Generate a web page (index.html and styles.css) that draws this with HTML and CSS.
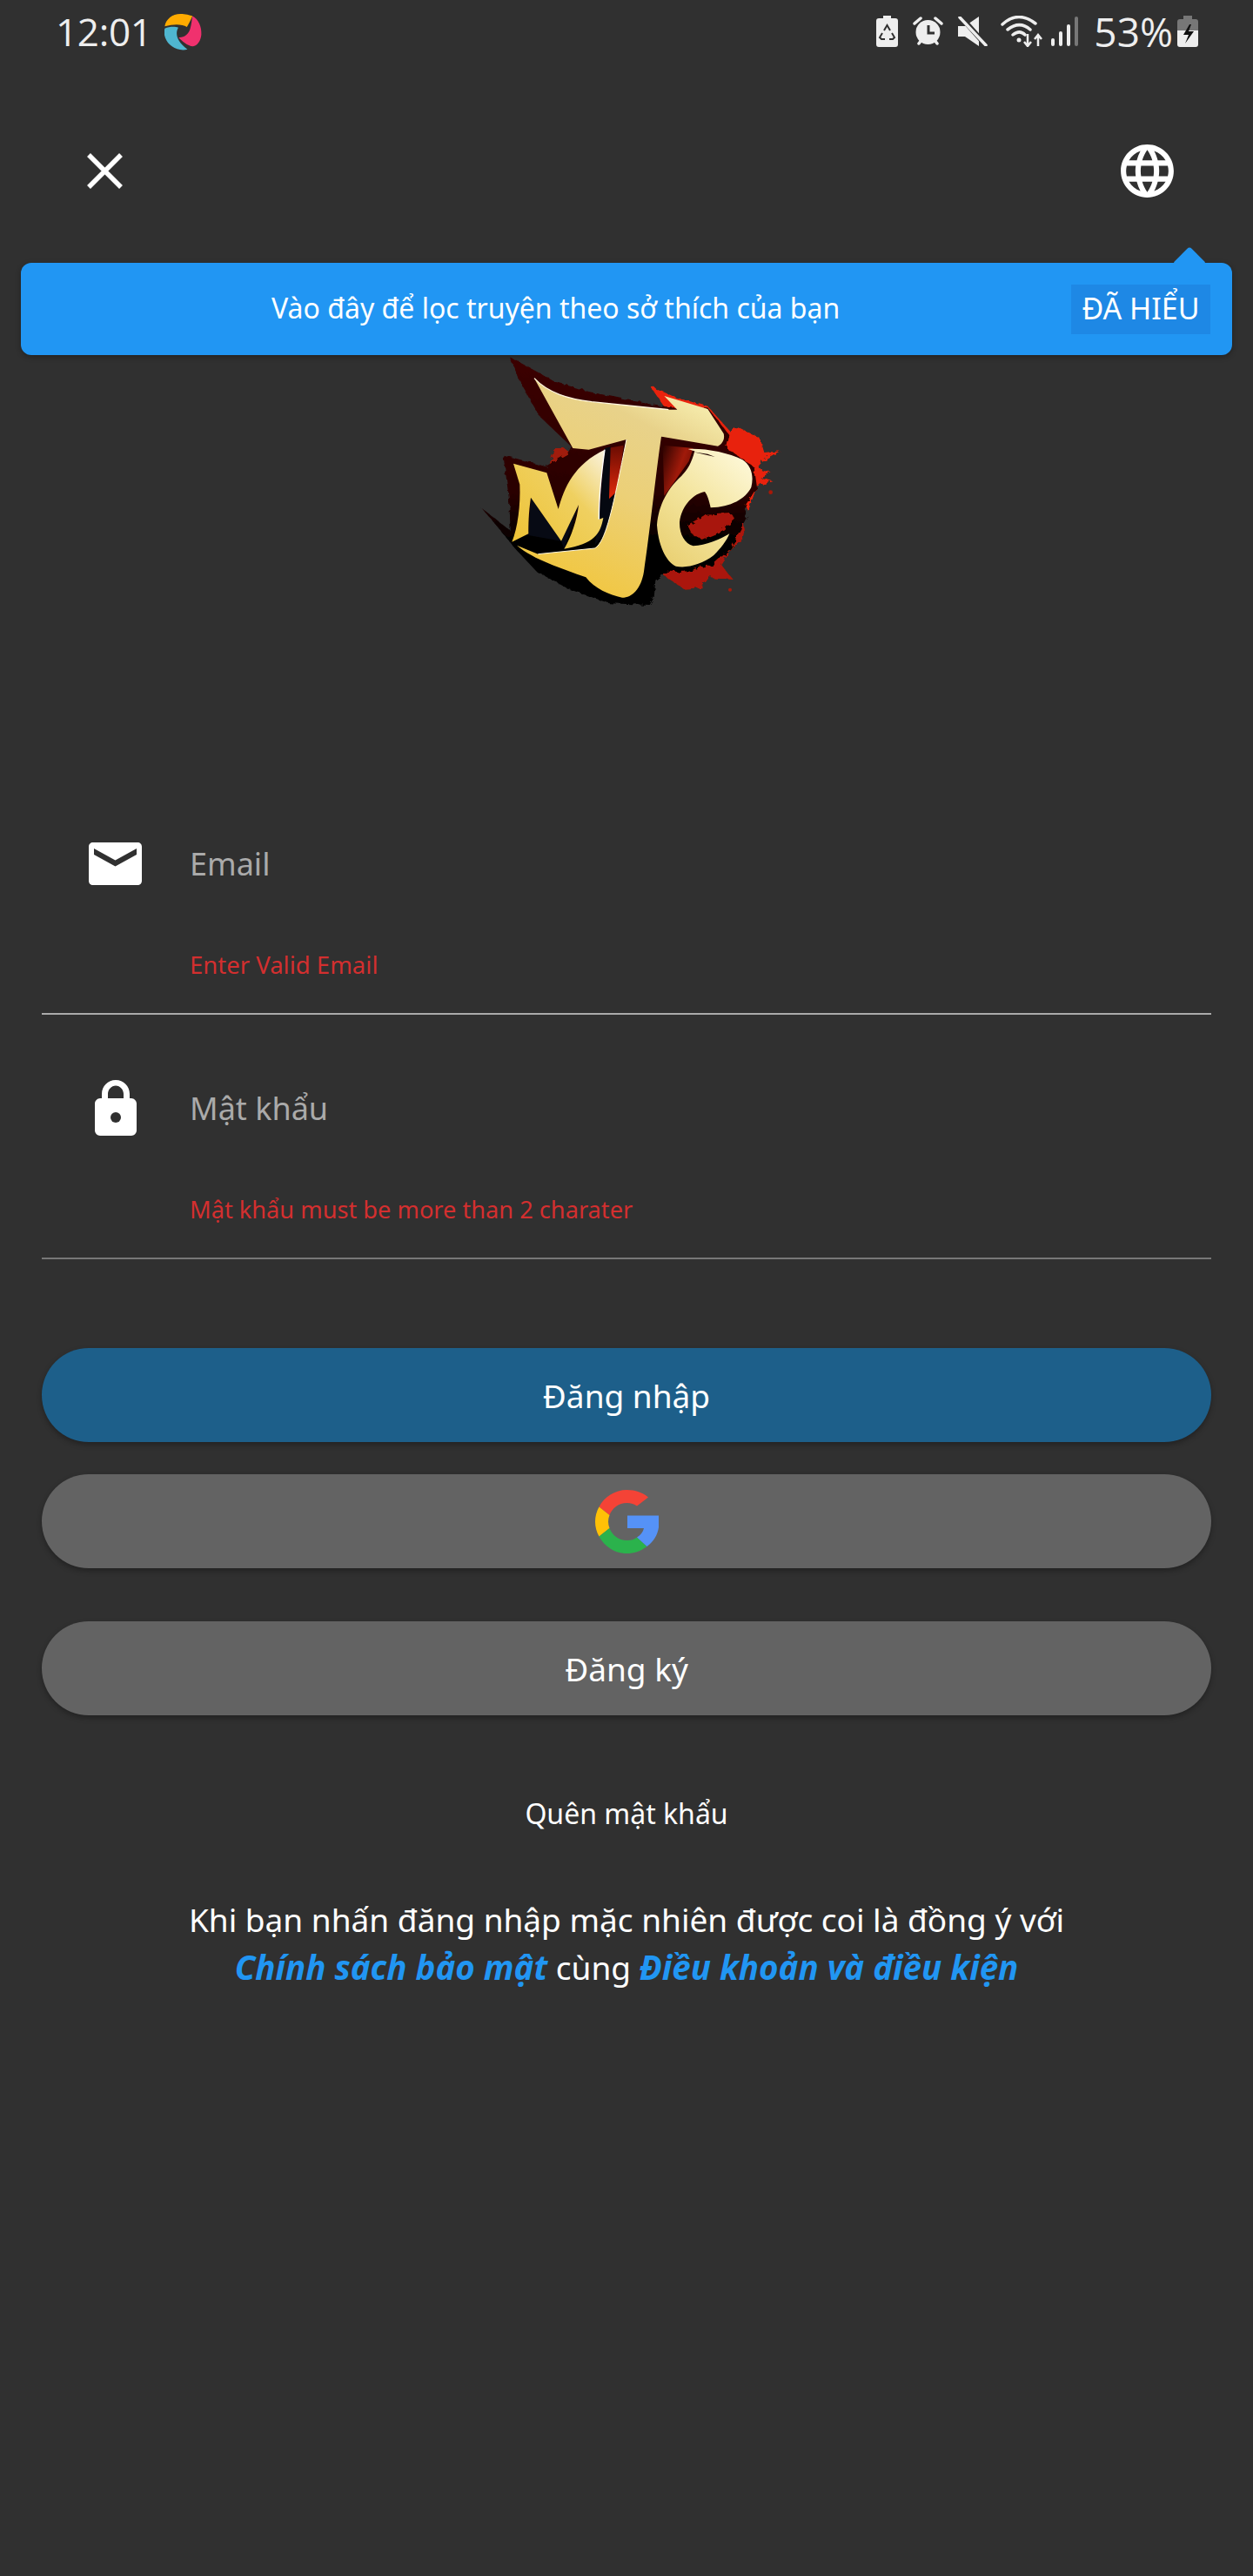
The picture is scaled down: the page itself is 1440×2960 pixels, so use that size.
FILE: index.html
```html
<!DOCTYPE html>
<html lang="vi">

<head>
    <meta charset="UTF-8">
    <meta name="viewport" content="width=device-width, initial-scale=1.0">
    <title>Đăng nhập</title>
    <link rel="stylesheet" href="styles.css">
</head>

<body>

    <div class="status-bar">
        <span class="status-time">12:01</span>
        <svg class="app-dot" width="43" height="43" viewBox="57 28 135 120" preserveAspectRatio="none">
            <path d="M58 68C62 45 85 28 115 28c15 0 35 4 43 7-8 15-13 25-20 35-18-10-48-10-80-2z" fill="#ffab00" />
            <path d="M58 75c17-7 37-7 49-3-12 18-7 43 33 70-35 8-70-12-80-37-5-13-5-20-2-30z" fill="#4fb6d0" />
            <path d="M158 35c22 10 34 35 32 60-2 20-15 35-30 37-20-2-40-17-52-29 17 2 37-8 42-28 5-15 5-25 8-40z" fill="#f0316e" />
        </svg>
        <div class="status-icons">
            <svg width="25" height="36" viewBox="0 0 25 36">
                <path d="M8 0h9v3h5c2 0 3 1 3 3v27c0 2-1 3-3 3H3c-2 0-3-1-3-3V6c0-2 1-3 3-3h5z" fill="#eee" />
                <path d="M9 17l3.500-6 3.500 6M7 20l-3 5 2 2h4M15 27h4l2-2-3-5" stroke="#303030" stroke-width="2" fill="none" />
            </svg>
            <svg width="35" height="34" viewBox="0 0 35 34">
                <circle cx="17.500" cy="18" r="14" fill="#eee" />
                <path d="M2 8l7-6M33 8l-7-6M7 31l3-4M28 31l-3-4" stroke="#eee" stroke-width="3.500" stroke-linecap="round" />
                <path d="M18 10v9h7" stroke="#303030" stroke-width="3" fill="none" />
            </svg>
            <svg width="34" height="34" viewBox="0 0 34 34">
                <path d="M0 11h8L24 0v34L8 23H0z" fill="#eee" />
                <path d="M2 -1l32 36" stroke="#303030" stroke-width="6" />
                <path d="M2 1l30 32" stroke="#eee" stroke-width="3.500" stroke-linecap="round" />
            </svg>
            <svg class="wifi" width="48" height="36" viewBox="0 0 48 36">
                <path d="M2 10C14-1 27-1 40 9M8 16c9-7 18-7 26 0M14 22c5-4 10-4 14 0" stroke="#eee" stroke-width="3.500" fill="none" stroke-linecap="round" />
                <circle cx="21" cy="28" r="2.500" fill="#eee" />
                <path d="M31 21v14m-4-5l4 5 4-5M43 35V23m-4 4l4-5 4 5" stroke="#eee" stroke-width="2.500" fill="none" />
            </svg>
            <svg class="signal" width="31" height="34" viewBox="0 0 31 34">
                <rect x="0" y="25" width="4" height="9" rx="2" fill="#eee" />
                <rect x="9" y="17" width="4" height="17" rx="2" fill="#eee" />
                <rect x="18" y="9" width="4" height="25" rx="2" fill="#eee" />
                <rect x="27" y="0" width="4" height="34" rx="2" fill="#777" />
            </svg>
            <span class="status-battery-text">53%</span>
            <svg class="battery" width="24" height="36" viewBox="0 0 24 36">
                <path d="M7 0h10v4h4c2 0 3 1 3 3v10H0V7c0-2 1-3 3-3h4z" fill="#777" />
                <path d="M0 17h24v16c0 2-1 3-3 3H3c-2 0-3-1-3-3z" fill="#eee" />
                <path d="M14 10l-7 12h6l-4 10 10-14h-6l3-8z" fill="#111" />
            </svg>
        </div>
    </div>

    <header class="top-bar">
        <svg class="close-icon" width="41" height="41" viewBox="0 0 41 41">
            <path d="M2 2l37 37M39 2L2 39" stroke="#fff" stroke-width="5.500" />
        </svg>
        <svg class="globe-icon" width="73" height="73" viewBox="0 0 24 24">
            <path fill="#fff" d="M11.990 2C6.470 2 2 6.480 2 12s4.470 10 9.990 10C17.520 22 22 17.520 22 12S17.520 2 11.990 2zm6.930 6h-2.950c-.32-1.250-.78-2.450-1.380-3.560 1.840.63 3.370 1.910 4.330 3.560zM12 4.040c.83 1.200 1.480 2.530 1.910 3.960h-3.820c.43-1.430 1.080-2.760 1.910-3.960zM4.260 14C4.100 13.360 4 12.690 4 12s.1-1.360.26-2h3.380c-.08.660-.14 1.320-.14 2 0 .68.060 1.340.14 2H4.260zm.82 2h2.950c.32 1.250.78 2.450 1.380 3.560-1.840-.63-3.370-1.900-4.330-3.560zm2.950-8H5.080c.96-1.660 2.490-2.930 4.330-3.560C8.810 5.550 8.350 6.750 8.030 8zM12 19.960c-.83-1.200-1.480-2.530-1.910-3.960h3.820c-.43 1.430-1.080 2.760-1.910 3.960zM14.340 14H9.660c-.09-.66-.16-1.320-.16-2 0-.68.070-1.350.16-2h4.680c.09.650.16 1.320.16 2 0 .68-.07 1.340-.16 2zm.25 5.560c.6-1.110 1.060-2.310 1.380-3.560h2.950c-.96 1.650-2.490 2.930-4.330 3.560zM16.360 14c.08-.66.14-1.320.14-2 0-.68-.06-1.340-.14-2h3.380c.16.640.26 1.310.26 2s-.1 1.360-.26 2h-3.380z" />
        </svg>
    </header>

    <div class="tip">
        <span class="tip-text">Vào đây để lọc truyện theo sở thích của bạn</span>
        <button class="tip-btn">ĐÃ HIỂU</button>
    </div>

    <div class="logo">
        <svg width="400" height="320" viewBox="0 0 1200 960">
            <defs>
                <linearGradient id="goldT" x1="0.2" y1="1" x2="0.7" y2="0">
                    <stop offset="0" stop-color="#f2c537" />
                    <stop offset="0.5" stop-color="#ecd077" />
                    <stop offset="0.8" stop-color="#e8d28a" />
                    <stop offset="1" stop-color="#f7eeb0" />
                </linearGradient>
                <linearGradient id="goldM" x1="0" y1="1" x2="1" y2="0">
                    <stop offset="0" stop-color="#eec232" />
                    <stop offset="0.6" stop-color="#efd060" />
                    <stop offset="1" stop-color="#faf3e0" />
                </linearGradient>
                <linearGradient id="goldC" x1="0.1" y1="1" x2="0.8" y2="0">
                    <stop offset="0" stop-color="#e9cf70" />
                    <stop offset="0.5" stop-color="#f3e49c" />
                    <stop offset="1" stop-color="#fdf7d6" />
                </linearGradient>
                <linearGradient id="darkEdge" x1="0" y1="0" x2="0" y2="1">
                    <stop offset="0" stop-color="#3c0402" />
                    <stop offset="0.55" stop-color="#2a0200" />
                    <stop offset="0.75" stop-color="#000" />
                </linearGradient>
                <linearGradient id="redPanel" x1="0" y1="0" x2="1" y2="0.6">
                    <stop offset="0" stop-color="#2a0200" />
                    <stop offset="0.6" stop-color="#a01a0a" />
                    <stop offset="1" stop-color="#6a0c02" />
                </linearGradient>
                <linearGradient id="redSlit" x1="0" y1="0" x2="0" y2="1">
                    <stop offset="0" stop-color="#6a0c02" />
                    <stop offset="1" stop-color="#e42a0c" />
                </linearGradient>
                <filter id="rough" x="-5%" y="-5%" width="110%" height="110%">
                    <feTurbulence type="fractalNoise" baseFrequency="0.05" numOctaves="2" seed="4" />
                    <feDisplacementMap in="SourceGraphic" scale="22" />
                </filter>
            </defs>
            <!-- splashes -->
            <g filter="url(#rough)">
                <path d="M680 130L770 170 880 200 960 290 980 270 1060 310 1075 360 1130 355 1060 392 1062 420 1100 430 1060 445 1105 460 1050 475 1020 560 900 400 800 300z" fill="#e8240a" />
                <path d="M1000 560L1010 650 960 690 925 745 965 795 885 790 860 825 800 830 730 785 720 740 900 600z" fill="#ab1808" />
                <path d="M335 400L350 345 385 345 420 370 375 385 355 410z" fill="#a01a08" />
                <path d="M195 28L300 85 350 115 470 150 640 185 740 205 880 205 955 300 945 345 1040 410 1050 480 1005 550 1018 576 985 640 960 690 900 745 800 770 740 770 700 800 695 860 680 885 540 880 400 830 290 770 215 690 150 610 97 548 200 630 195 520 175 368 320 408 395 365 410 340 300 235 240 130z" fill="url(#darkEdge)" />
            </g>
            <circle cx="1097" cy="497" r="7" fill="#a81808" />
            <circle cx="957" cy="833" r="6" fill="#a81808" />
            <path d="M725 335L830 345 815 390 730 510z" fill="url(#redPanel)" />
            <path d="M535 345L590 335 570 490 540 520z" fill="url(#redSlit)" />
            <path d="M525 345L545 340 540 520 580 490 555 600 490 680 505 590z" fill="#050811" />
            <path d="M810 610L870 575 960 570 975 590 930 630 860 660 825 640z" fill="#a81508" filter="url(#rough)" />
            <path d="M270 515L375 665 262 645z" fill="#070a14" />
            <path d="M435 540L385 692 375 665z" fill="#070a14" />
            <!-- letters -->
            <path d="M282 104C330 155 400 175 480 185L745 212 775 212 730 165 880 210 935 295C940 315 930 330 915 338L720 305C700 440 680 640 660 770 650 830 620 860 585 860 540 850 490 830 460 790 380 760 280 730 222 680L295 710 490 690C530 670 555 540 600 315L470 350 415 345z" fill="url(#goldT)" />
            <path d="M210 398L325 430 365 555C385 480 420 400 525 350 515 420 505 520 505 590L520 585C510 640 490 675 385 692 410 650 430 590 435 540L375 665 270 515C262 570 262 610 262 640L205 668C225 620 235 540 232 470z" fill="url(#goldM)" />
            <path d="M835 355C825 352 818 350 812 348 870 345 950 360 1000 385 1030 405 1040 440 1030 480 1010 520 960 548 890 550 885 525 878 505 870 495 835 500 790 540 783 600 782 640 800 675 830 682 875 680 920 660 955 640 945 665 925 690 900 715 860 745 810 760 770 752 735 735 710 680 705 610 710 540 745 480 790 440 810 420 825 395 835 355z" fill="url(#goldC)" />
            <path d="M830 358L905 375 880 365z" fill="#1f0200" />
            <!-- light rims -->
            <path d="M282 104C330 155 400 175 480 185L745 212" stroke="#fff8e0" stroke-width="4" fill="none" />
            <path d="M295 710L490 690C530 670 555 540 600 315" stroke="#fff8e0" stroke-width="3" fill="none" />
            <path d="M525 350C515 420 505 520 505 590" stroke="#fff" stroke-width="4" fill="none" />
        </svg>
    </div>

    <form class="login-form">
        <div class="field">
            <div class="field-row">
                <svg class="field-icon" width="61" height="49" viewBox="0 0 61 49">
                    <path fill-rule="evenodd" d="M5 0h51c3 0 5 2 5 5v39c0 3-2 5-5 5H5c-3 0-5-2-5-5V5c0-3 2-5 5-5zM6 7l24.500 13.500L55 7v7L30.500 27.500 6 14z" fill="#fff" />
                </svg>
                <span class="field-label">Email</span>
            </div>
            <p class="field-error">Enter Valid Email</p>
        </div>

        <div class="field field-dim">
            <div class="field-row">
                <svg class="field-icon field-icon-lock" width="48" height="64" viewBox="0 0 48 64">
                    <path fill-rule="evenodd" d="M8 21V16C8 7 15 0 24 0s16 7 16 16v5h2c3 0 6 3 6 6v31c0 3-3 6-6 6H6c-3 0-6-3-6-6V27c0-3 3-6 6-6zm7 0h18v-5c0-5-4-9.500-9-9.500s-9 4.500-9 9.500z" fill="#fff" />
                    <circle cx="24" cy="43" r="6" fill="#303030" />
                </svg>
                <span class="field-label">Mật khẩu</span>
            </div>
            <p class="field-error field-error-long">Mật khẩu must be more than 2 charater</p>
        </div>

        <button type="button" class="btn btn-login">Đăng nhập</button>
        <button type="button" class="btn btn-google">
            <svg width="73" height="73" viewBox="0 0 73 73">
                <path d="M36.500 0c10 0 18 3 24.500 8.500L48 18.500c-3-2-7-3.500-11.500-3.500-9.500 0-17 6-20 14L4.500 19.500C10.500 8 22.500 0 36.500 0z" fill="#f44336" />
                <path d="M4.500 19.500L16.500 29c-2 5-2 10 0 15L4.500 53.500C-1.500 43-1.500 30 4.500 19.500z" fill="#ffc107" />
                <path d="M4.500 53.500L16.500 44c3 8 10.500 14 20 14 5 0 8.500-1 11.500-3.500l11.500 10.500C53 70 45 73 36.500 73 22.500 73 10.500 65 4.500 53.500z" fill="#2bb24c" />
                <path d="M37 29.500h36c.5 2 .5 5 .5 7 0 11-4 21.500-14 28.500L48 54.500c4-2.500 7-6 8-10.500H37z" fill="#5592f7" />
            </svg>
        </button>
        <button type="button" class="btn btn-register">Đăng ký</button>
    </form>

    <a class="forgot">Quên mật khẩu</a>

    <p class="terms">
        Khi bạn nhấn đăng nhập mặc nhiên được coi là đồng ý với<br>
        <a>Chính sách bảo mật</a> cùng <a>Điều khoản và điều kiện</a>
    </p>

</body>

</html>
```

FILE: styles.css
```css
body {
    font-family: "Noto Sans", Arial, sans-serif;
    margin: 0;
    height: 2960px;
    overflow: hidden;
    position: relative;
    background-color: #303030;
    color: white;
}

.status-bar {
    display: flex;
    align-items: center;
    height: 72px;
    padding: 0 63px 0 64px;
    color: #eee;
}

.status-time {
    font-family: "Open Sans", sans-serif;
    font-size: 44px;
    letter-spacing: -0.300px;
    width: 125px;
}

.app-dot {
    flex: none;
    margin-top: 2px;
}

.status-icons {
    display: flex;
    align-items: center;
    margin-left: auto;
    gap: 17px;
}

.status-icons .wifi {
    margin-left: -2px;
}

.status-icons .signal {
    margin-left: -7px;
}

.status-battery-text {
    font-family: "Open Sans", sans-serif;
    font-size: 46px;
    margin-left: 1px;
}

.status-icons .battery {
    margin-left: -12px;
}

.top-bar {
    display: flex;
    justify-content: space-between;
    align-items: center;
    height: 73px;
    padding: 88px 85px 0 100px;
}

.tip {
    position: absolute;
    top: 302px;
    left: 24px;
    width: 1392px;
    height: 106px;
    display: flex;
    align-items: center;
    box-sizing: border-box;
    padding-bottom: 3px;
    background-color: #2196F3;
    border-radius: 12px;
    box-shadow: 0 2px 6px rgba(0, 0, 0, 0.3);
}

.tip::before {
    content: "";
    position: absolute;
    top: -13px;
    left: 1329px;
    width: 28px;
    height: 28px;
    background-color: #2196F3;
    border-radius: 4px;
    transform: rotate(45deg);
}

.tip-text {
    font-size: 32px;
    margin-left: 288px;
}

.tip-btn {
    position: absolute;
    top: 25px;
    left: 1207px;
    width: 160px;
    height: 57px;
    border: none;
    padding: 0 0 3px;
    background-color: #1E88E5;
    color: white;
    font-family: inherit;
    font-size: 34px;
}

.logo {
    display: flex;
    justify-content: center;
    margin-top: 167px;
    height: 320px;
}

.login-form {
    display: flex;
    flex-direction: column;
    margin: 0 48px;
    padding-top: 165px;
}

.field {
    height: 281px;
    padding-top: 75px;
    box-sizing: border-box;
    border-bottom: 2px solid #aaa;
}

.field-dim {
    border-bottom-color: #777;
}

.field-row {
    display: flex;
    align-items: center;
    height: 64px;
    position: relative;
}

.field-icon {
    flex: none;
    margin-left: 54px;
}

.field-icon-lock {
    margin-left: 61px;
}

.field-label {
    margin-left: 55px;
    font-size: 36px;
    color: #aaa;
}

.field-icon-lock + .field-label {
    margin-left: 61px;
}

.field-error {
    margin: 66px 0 0 170px;
    font-size: 27.500px;
    color: #d32f2f;
}

.field-error-long {
    font-size: 27.200px;
}

.btn {
    display: flex;
    justify-content: center;
    align-items: center;
    height: 108px;
    border: none;
    border-radius: 54px;
    padding: 0;
    color: white;
    font-family: inherit;
    font-size: 37px;
    box-shadow: 0 3px 6px rgba(0, 0, 0, 0.3);
}

.btn-login {
    margin-top: 102px;
    background-color: #1D5F8A;
}

.btn-google {
    margin-top: 37px;
    background-color: #636363;
}

.btn-register {
    margin-top: 61px;
    background-color: #636363;
}

.forgot {
    display: block;
    margin-top: 91px;
    text-align: center;
    font-size: 32px;
}

.terms {
    margin: 74px 0 0;
    text-align: center;
    font-size: 37px;
    line-height: 54px;
}

.terms a {
    color: #2196F3;
    font-size: 38.500px;
    font-weight: bold;
    font-style: italic;
}
```
